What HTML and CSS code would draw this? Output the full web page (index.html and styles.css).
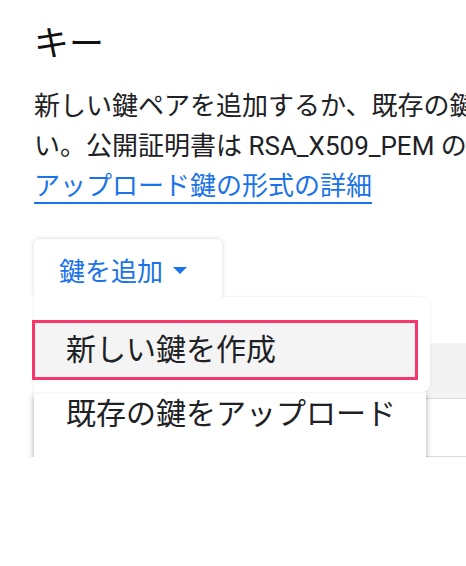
FILE: index.html
```html
<!DOCTYPE html>
<html lang="ja">
<head>
<meta charset="utf-8">
<title>キー</title>
<link rel="stylesheet" href="styles.css">
</head>
<body>
<main class="page">
  <h1 class="title">キー</h1>
  <p class="desc">
    <span class="line">新しい鍵ペアを追加するか、既存の鍵をアップロードしてくださ</span>
    <span class="line">い。公開証明書は RSA_X509_PEM の形式である必要があります。</span>
    <span class="line"><a class="link" href="#">アップロード鍵の形式の詳細</a></span>
  </p>
  <div class="actions">
    <button class="add-btn" type="button">鍵を追加<span class="caret"></span></button>
    <div class="menu-top">
      <div class="menu-item is-focused">新しい鍵を作成</div>
    </div>
    <div class="menu-bottom">
      <div class="menu-item">既存の鍵をアップロード</div>
    </div>
  </div>
  <div class="table">
    <div class="table-head"></div>
    <div class="table-row"></div>
  </div>
</main>
</body>
</html>
```

FILE: styles.css
```css
html, body {
  margin: 0;
  padding: 0;
  background: #ffffff;
  overflow: hidden;
}

body {
  font-family: Roboto, "Noto Sans CJK JP", sans-serif;
  color: #202124;
}

.page {
  padding-left: 34px;
  width: 700px;
}

.title {
  margin: 23px 0 0 0;
  font-size: 35px;
  font-weight: 400;
  line-height: 44px;
  color: #111111;
}

.desc {
  margin: 19px 0 0 0;
  font-size: 26px;
  line-height: 40px;
}

.line {
  display: block;
  white-space: nowrap;
}

.link {
  color: #1a73e8;
  text-decoration: underline;
  text-decoration-thickness: 2px;
  text-underline-offset: 7px;
}

.actions {
  position: relative;
  margin-top: 33px;
  height: 58px;
}

.add-btn {
  position: relative;
  z-index: 3;
  display: flex;
  align-items: center;
  box-sizing: border-box;
  width: 188px;
  height: 58px;
  margin: 0;
  padding: 8px 0 0 25px;
  border: none;
  border-radius: 5px 5px 0 0;
  background: #ffffff;
  box-shadow: 0 0 4px rgba(0, 0, 0, 0.18);
  clip-path: inset(-8px -8px 0 -8px);
  font-family: inherit;
  font-size: 26px;
  color: #1a73e8;
  line-height: 40px;
}

.caret {
  width: 0;
  height: 0;
  margin-left: 10px;
  margin-top: -4px;
  border-left: 7px solid transparent;
  border-right: 7px solid transparent;
  border-top: 7px solid #1a73e8;
}

.menu-top {
  position: absolute;
  z-index: 2;
  left: 0;
  top: 58px;
  width: 396px;
  height: 95px;
  box-sizing: border-box;
  padding-top: 23px;
  background: #ffffff;
  border-radius: 0 8px 8px 0;
  box-shadow: 0 0 3px rgba(0, 0, 0, 0.1);
}

.menu-bottom {
  position: absolute;
  z-index: 1;
  left: 0;
  top: 153px;
  width: 392px;
  height: 71px;
  box-sizing: border-box;
  padding-top: 2px;
  background: #ffffff;
  box-shadow: 0 3px 6px rgba(0, 0, 0, 0.35);
}

.menu-item {
  box-sizing: border-box;
  padding-left: 32px;
  font-size: 30px;
  line-height: 40px;
  color: #202124;
  white-space: nowrap;
}

.is-focused {
  display: flex;
  align-items: center;
  margin-left: -2px;
  width: 386px;
  height: 60px;
  padding-left: 31px;
  background: #f4f4f4;
  border: 3px solid #f7376b;
}

.table {
  margin-top: 46px;
}

.table-head {
  height: 55px;
  background: #f3f3f3;
  border-bottom: 1px solid #dadce0;
}

.table-row {
  height: 57px;
  border-bottom: 1px solid #dadce0;
}
```
